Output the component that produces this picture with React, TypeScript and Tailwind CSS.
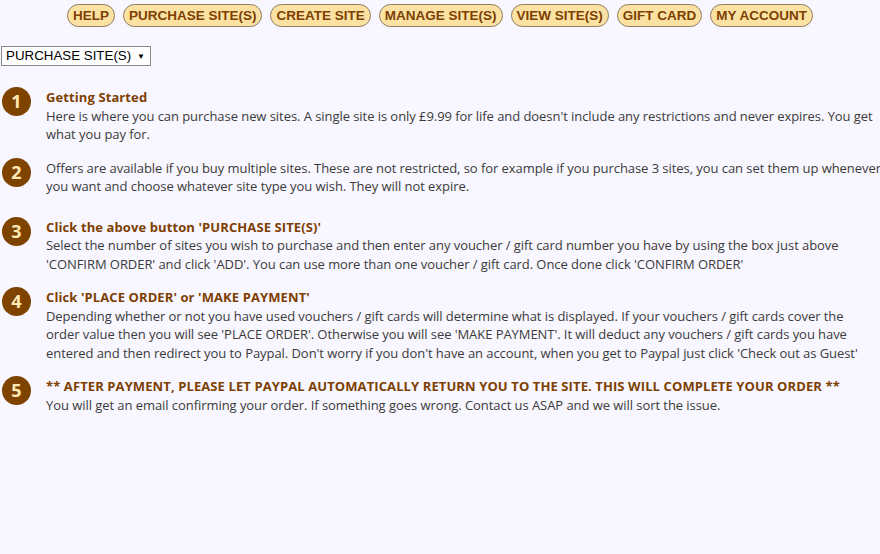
import { useState } from 'react'

const navItems = ['HELP', 'PURCHASE SITE(S)', 'CREATE SITE', 'MANAGE SITE(S)', 'VIEW SITE(S)', 'GIFT CARD', 'MY ACCOUNT']

type Step = { title?: string; body: string[]; extra?: string }

const steps: Step[] = [
  {
    title: 'Getting Started',
    body: [
      "Here is where you can purchase new sites. A single site is only £9.99 for life and doesn't include any restrictions and never expires. You get",
      'what you pay for.',
    ],
  },
  {
    body: [
      'Offers are available if you buy multiple sites. These are not restricted, so for example if you purchase 3 sites, you can set them up whenever',
      'you want and choose whatever site type you wish. They will not expire.',
    ],
    extra: 'mb-[7px]',
  },
  {
    title: "Click the above button 'PURCHASE SITE(S)'",
    body: [
      'Select the number of sites you wish to purchase and then enter any voucher / gift card number you have by using the box just above',
      "'CONFIRM ORDER' and click 'ADD'. You can use more than one voucher / gift card. Once done click 'CONFIRM ORDER'",
    ],
  },
  {
    title: "Click 'PLACE ORDER' or 'MAKE PAYMENT'",
    body: [
      'Depending whether or not you have used vouchers / gift cards will determine what is displayed. If your vouchers / gift cards cover the',
      "order value then you will see 'PLACE ORDER'. Otherwise you will see 'MAKE PAYMENT'. It will deduct any vouchers / gift cards you have",
      "entered and then redirect you to Paypal. Don't worry if you don't have an account, when you get to Paypal just click 'Check out as Guest'",
    ],
  },
  {
    title: '** AFTER PAYMENT, PLEASE LET PAYPAL AUTOMATICALLY RETURN YOU TO THE SITE. THIS WILL COMPLETE YOUR ORDER **',
    body: ['You will get an email confirming your order. If something goes wrong. Contact us ASAP and we will sort the issue.'],
  },
]

export default function App() {
  const [page, setPage] = useState('PURCHASE SITE(S)')

  return (
    <div className="min-h-[554px] bg-[#f8f6ff] pt-[4px]">
      <nav className="flex justify-center gap-[8px] font-['Liberation_Sans',Arial,sans-serif]">
        {navItems.map((item) => (
          <button
            key={item}
            className="h-[23px] rounded-full border border-[#8d7d63] bg-[#fce2a2] px-[5px] text-[13.5px] font-bold leading-none text-[#7d3f02]"
          >
            {item}
          </button>
        ))}
      </nav>

      <div className="relative mt-[19px] ml-[1px] w-[150px]">
        <select
          value={page}
          onChange={(e) => setPage(e.target.value)}
          className="block h-[20px] w-[150px] appearance-none border border-[#8a8a8a] bg-white pl-[4px] font-['Liberation_Sans',Arial,sans-serif] text-[13.33px] leading-none text-black outline-none"
        >
          {navItems.map((item) => (
            <option key={item}>{item}</option>
          ))}
        </select>
        <span className="pointer-events-none absolute top-[4px] left-[136px] text-[8px] leading-[12px] text-black">▼</span>
      </div>

      <ol className="mt-[21px] flex flex-col gap-[14px] pl-[2px] font-['Open_Sans',sans-serif] text-[13px] leading-[18.5px] tracking-[-0.06px] text-[#3b3b3b]">
        {steps.map((step, i) => (
          <li key={i} className={`flex items-start gap-[15px] ${step.extra ?? ''}`}>
            <span className="flex h-[29px] w-[29px] shrink-0 items-center justify-center rounded-full bg-[#7f4300] text-[18px] font-bold tracking-normal text-[#fde9b6]">
              {i + 1}
            </span>
            <div className="pt-[1px]">
              {step.title && <p className="font-bold tracking-[0.1px] text-[#7d3f02]">{step.title}</p>}
              {step.body.map((line) => (
                <p key={line} className="whitespace-nowrap">
                  {line}
                </p>
              ))}
            </div>
          </li>
        ))}
      </ol>
    </div>
  )
}
